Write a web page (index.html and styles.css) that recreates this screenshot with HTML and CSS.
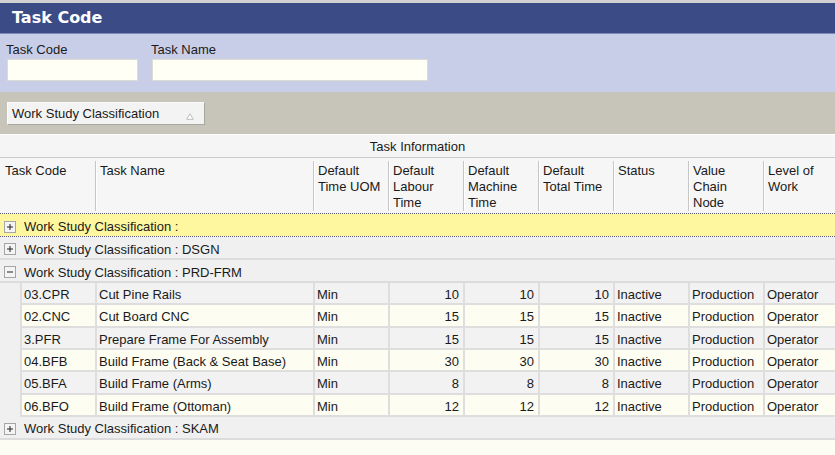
FILE: index.html
```html
<!DOCTYPE html>
<html>
<head>
<meta charset="utf-8">
<link rel="stylesheet" href="styles.css">
</head>
<body>
<div class="window">
  <header class="titlebar">Task Code</header>
  <section class="filters">
    <div class="field code">
      <label class="label">Task Code</label>
      <div class="input"></div>
    </div>
    <div class="field name">
      <label class="label">Task Name</label>
      <div class="input"></div>
    </div>
  </section>
  <section class="grouping">
    <div class="groupbtn">
      <span>Work Study Classification</span>
      <svg class="sorttri" width="8" height="7" viewBox="0 0 8 7"><path d="M4 0.8 L7.3 6.3 L0.7 6.3 Z" fill="#ffffff" stroke="#bdbdbd" stroke-width="1"/></svg>
    </div>
  </section>
  <div class="grid">
    <div class="band">Task Information</div>
    <div class="cols">
      <div class="hc first">Task Code</div>
      <div class="hc">Task Name</div>
      <div class="hc">Default<br>Time UOM</div>
      <div class="hc">Default<br>Labour<br>Time</div>
      <div class="hc">Default<br>Machine<br>Time</div>
      <div class="hc">Default<br>Total Time</div>
      <div class="hc">Status</div>
      <div class="hc">Value<br>Chain<br>Node</div>
      <div class="hc">Level of<br>Work</div>
    </div>

    <div class="group focused">
      <svg class="exp" width="12" height="12" viewBox="0 0 12 12"><rect x="0.5" y="0.5" width="11" height="11" fill="#f4f4f4" stroke="#a6a6a6"/><path d="M3 6 H9 M6 3 V9" stroke="#222" stroke-width="1"/></svg>
      <span>Work Study Classification :</span>
    </div>
    <div class="group">
      <svg class="exp" width="12" height="12" viewBox="0 0 12 12"><rect x="0.5" y="0.5" width="11" height="11" fill="#f4f4f4" stroke="#a6a6a6"/><path d="M3 6 H9 M6 3 V9" stroke="#222" stroke-width="1"/></svg>
      <span>Work Study Classification : DSGN</span>
    </div>
    <div class="group">
      <svg class="exp" width="12" height="12" viewBox="0 0 12 12"><rect x="0.5" y="0.5" width="11" height="11" fill="#f4f4f4" stroke="#a6a6a6"/><path d="M3 6 H9" stroke="#222" stroke-width="1"/></svg>
      <span>Work Study Classification : PRD-FRM</span>
    </div>

    <div class="rows">
      <div class="row alt">
        <div class="c">03.CPR</div><div class="c">Cut Pine Rails</div><div class="c">Min</div>
        <div class="c num">10</div><div class="c num">10</div><div class="c num">10</div>
        <div class="c">Inactive</div><div class="c">Production</div><div class="c">Operator</div>
      </div>
      <div class="row">
        <div class="c">02.CNC</div><div class="c">Cut Board CNC</div><div class="c">Min</div>
        <div class="c num">15</div><div class="c num">15</div><div class="c num">15</div>
        <div class="c">Inactive</div><div class="c">Production</div><div class="c">Operator</div>
      </div>
      <div class="row alt">
        <div class="c">3.PFR</div><div class="c">Prepare Frame For Assembly</div><div class="c">Min</div>
        <div class="c num">15</div><div class="c num">15</div><div class="c num">15</div>
        <div class="c">Inactive</div><div class="c">Production</div><div class="c">Operator</div>
      </div>
      <div class="row">
        <div class="c">04.BFB</div><div class="c">Build Frame (Back &amp; Seat Base)</div><div class="c">Min</div>
        <div class="c num">30</div><div class="c num">30</div><div class="c num">30</div>
        <div class="c">Inactive</div><div class="c">Production</div><div class="c">Operator</div>
      </div>
      <div class="row alt">
        <div class="c">05.BFA</div><div class="c">Build Frame (Arms)</div><div class="c">Min</div>
        <div class="c num">8</div><div class="c num">8</div><div class="c num">8</div>
        <div class="c">Inactive</div><div class="c">Production</div><div class="c">Operator</div>
      </div>
      <div class="row">
        <div class="c">06.BFO</div><div class="c">Build Frame (Ottoman)</div><div class="c">Min</div>
        <div class="c num">12</div><div class="c num">12</div><div class="c num">12</div>
        <div class="c">Inactive</div><div class="c">Production</div><div class="c">Operator</div>
      </div>
    </div>

    <div class="group">
      <svg class="exp" width="12" height="12" viewBox="0 0 12 12"><rect x="0.5" y="0.5" width="11" height="11" fill="#f4f4f4" stroke="#a6a6a6"/><path d="M3 6 H9 M6 3 V9" stroke="#222" stroke-width="1"/></svg>
      <span>Work Study Classification : SKAM</span>
    </div>
    <div class="filler"></div>
  </div>
</div>
</body>
</html>
```

FILE: styles.css
```css
* { box-sizing: border-box; }
html, body {
  margin: 0;
  padding: 0;
  width: 835px;
  height: 455px;
  overflow: hidden;
  background: #fdfdf3;
}
.window {
  font-family: "Liberation Sans", Arial, sans-serif;
  font-size: 13px;
  color: #1a1a1a;
  display: flex;
  flex-direction: column;
  height: 455px;
  border-top: 3px solid #d2d2d2;
}
.titlebar {
  height: 31px;
  background: #3a4b86;
  border-bottom: 1px solid #7c89b8;
  color: #ffffff;
  font-family: "DejaVu Sans", Verdana, sans-serif;
  font-weight: bold;
  font-size: 16px;
  line-height: 30px;
  padding-left: 12px;
}
.filters {
  background: #c9cee8;
  height: 58px;
  padding: 8px 0 0 7px;
  display: flex;
  gap: 14px;
}
.field { display: flex; flex-direction: column; gap: 1px; }
.field .label { line-height: 16px; margin-left: -1px; }
.field.code { width: 131px; }
.field.name { width: 276px; }
.input {
  height: 22px;
  background: #fffff6;
  border: 1px solid #dcdcd2;
}
.grouping {
  background: #c7c5b9;
  height: 42px;
  padding: 10px 0 0 7px;
}
.groupbtn {
  width: 198px;
  height: 23px;
  background: #f3f3f3;
  border-top: 1px solid #fbfbfb;
  border-left: 1px solid #fbfbfb;
  border-right: 1px solid #a9a89f;
  border-bottom: 1px solid #a9a89f;
  display: flex;
  align-items: center;
  justify-content: space-between;
  padding: 1px 10px 0 4px;
  line-height: 20px;
}
.sorttri { margin-top: 5px; }
.grid {
  flex: 1;
  display: flex;
  flex-direction: column;
  background: #fdfdf3;
}
.band {
  height: 24px;
  background: #f5f5f5;
  border-top: 1px solid #ffffff;
  border-bottom: 1px solid #c9c9c9;
  text-align: center;
  line-height: 22px;
  padding-top: 1px;
}
.cols {
  display: grid;
  grid-template-columns: 95px 218px 75px 75px 75px 75px 75px 75px 1fr;
  height: 55px;
  background: #f6f6f6;
}
.hc {
  margin: 3px 0 2px;
  padding: 2px 0 0 4px;
  line-height: 16px;
  border-left: 1px solid #c6c6c6;
  box-shadow: inset 1px 0 0 #ffffff;
}
.hc.first { border-left: none; box-shadow: none; padding-left: 5px; }
.group {
  height: 23px;
  background: #f0f0f0;
  border-bottom: 2px solid #dcdcdc;
  display: flex;
  align-items: center;
  gap: 8px;
  padding: 3px 0 0 4px;
}
.group.focused {
  height: 24px;
  background: #fff79f;
  border-top: 1px dotted #5d5d78;
  border-bottom: 1px dotted #5d5d78;
}
.exp { flex: none; }
.rows {
  background: #f0f0f0;
  padding-left: 20px;
}
.row {
  display: grid;
  grid-template-columns: 75px 218px 75px 75px 75px 75px 75px 75px 1fr;
  height: 22.33px;
  background: #fdfdf2;
  border-bottom: 2px solid #dedede;
}
.row.alt { background: #f2f2f2; }
.c {
  border-left: 2px solid #dedede;
  padding: 2px 4px 0 2px;
  line-height: 20px;
  white-space: nowrap;
}
.c.num { text-align: right; }
.filler { flex: 1; background: #fdfdf3; }
```
